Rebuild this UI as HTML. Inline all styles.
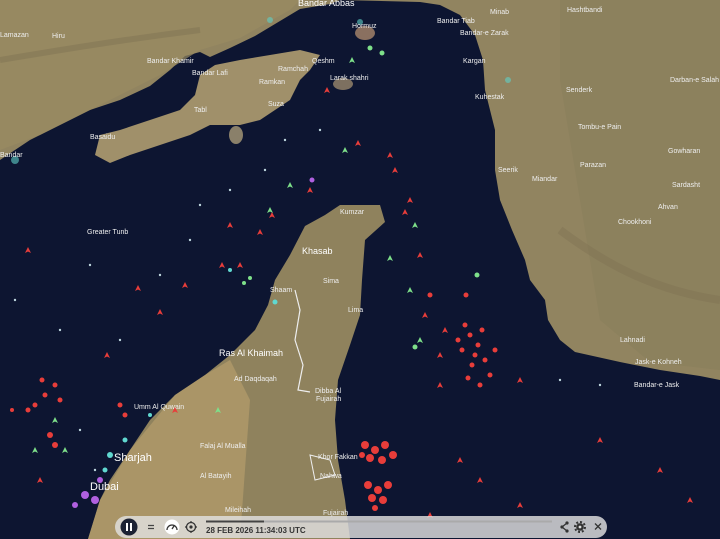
<!DOCTYPE html>
<html><head><meta charset="utf-8"><style>
html,body{margin:0;padding:0;width:720px;height:539px;overflow:hidden;background:#0d1531}
svg{position:absolute;left:0;top:0}
text{font-family:"Liberation Sans",sans-serif;fill:#eee;font-size:7px}
.b{font-size:9px;fill:#fff}
.bar{position:absolute;left:115px;top:516px;width:492px;height:22px;border-radius:11px;background:rgba(225,225,225,0.82)}
</style></head><body>
<svg width="720" height="539" viewBox="0 0 720 539">
<defs>
<path id="t" d="M0,-3 L3,3 L0,1.5 L-3,3Z"/>
</defs>
<rect width="720" height="539" fill="#0d1531"/>
<!-- Iran mainland -->
<path d="M0,0 L720,0 L720,380 L700,376 L660,370 L620,362 L575,352 L560,340 L548,320 L545,300 L530,280 L525,260 L512,230 L500,200 L495,170 L495,130 L485,90 L483,60 L475,35 L460,15 L440,5 L420,2 L340,0 L330,4 L300,9 L280,21 L255,36 L230,48 L210,57 L200,52 L185,56 L170,70 L150,86 L120,100 L90,110 L60,125 L30,140 L0,160Z" fill="#918460"/>
<path d="M0,0 L300,0 L290,10 L240,38 L200,50 L160,75 L100,105 L40,135 L0,150Z" fill="#9a8b62" opacity=".7"/>
<path d="M560,0 L720,0 L720,370 L650,362 L600,320 L580,200 L560,80Z" fill="#877d5a" opacity=".5"/>
<path d="M0,60 C60,50 120,40 200,30" stroke="#7a6e50" stroke-width="6" fill="none" opacity=".4"/>
<path d="M560,230 C600,260 650,290 720,300" stroke="#7a6e50" stroke-width="8" fill="none" opacity=".35"/>
<!-- Qeshm -->
<path d="M95,155 L100,135 L120,130 L150,120 L180,110 L195,95 L200,75 L215,65 L240,60 L270,55 L300,50 L320,55 L310,70 L300,80 L290,100 L275,110 L260,120 L240,125 L210,125 L190,135 L160,145 L130,155 L110,163Z" fill="#a0906a"/>
<ellipse cx="365" cy="33" rx="10" ry="7" fill="#8a7060"/>
<ellipse cx="343" cy="84" rx="10" ry="6" fill="#7d7060"/>
<ellipse cx="236" cy="135" rx="7" ry="9" fill="#8a806a"/>
<!-- Arabia / Musandam -->
<path d="M305,226 L325,215 L340,205 L380,205 L385,222 L365,240 L362,280 L360,315 L350,345 L338,380 L335,420 L338,460 L345,500 L350,539 L88,539 L100,500 L110,480 L130,450 L150,420 L175,395 L205,375 L230,355 L255,330 L268,305 L275,280 L290,255Z" fill="#8f825d"/>
<path d="M88,539 L100,500 L130,450 L175,395 L205,375 L230,360 L250,400 L240,539Z" fill="#b09a6a" opacity=".8"/>
<path d="M295,290 L300,310 L295,340 L303,365 L298,390 L310,392" stroke="#eee" stroke-width="1.2" fill="none"/>
<path d="M310,455 L330,460 L335,475 L315,480Z" stroke="#eee" stroke-width="1" fill="none"/>
<g fill="#5fd0c8" opacity=".6"><circle cx="15" cy="160" r="4"/><circle cx="360" cy="22" r="3"/><circle cx="270" cy="20" r="3"/><circle cx="508" cy="80" r="3"/></g>
<!-- labels -->
<text x="298" y="6" class="b">Bandar Abbas</text>
<text x="0" y="37">Lamazan</text><text x="52" y="38">Hiru</text>
<text x="352" y="28">Hormuz</text><text x="147" y="63">Bandar Khamir</text>
<text x="192" y="75">Bandar Lafi</text><text x="278" y="71">Ramchah</text>
<text x="312" y="63">Qeshm</text><text x="259" y="84">Ramkan</text>
<text x="330" y="80">Larak shahri</text><text x="194" y="112">Tabl</text>
<text x="268" y="106">Suza</text><text x="90" y="139">Basaidu</text>
<text x="0" y="157">Bandar</text><text x="437" y="23">Bandar Tiab</text>
<text x="460" y="35">Bandar-e Zarak</text><text x="463" y="63">Kargan</text>
<text x="475" y="99">Kuhestak</text><text x="490" y="14">Minab</text>
<text x="567" y="12">Hashtbandi</text><text x="670" y="82">Darban-e Salah</text>
<text x="566" y="92">Senderk</text><text x="578" y="129">Tombu-e Pain</text>
<text x="668" y="153">Gowharan</text><text x="580" y="167">Parazan</text>
<text x="498" y="172">Seerik</text><text x="532" y="181">Miandar</text>
<text x="672" y="187">Sardasht</text><text x="658" y="209">Ahvan</text>
<text x="618" y="224">Chookhoni</text><text x="620" y="342">Lahnadi</text>
<text x="635" y="364">Jask-e Kohneh</text><text x="634" y="387">Bandar-e Jask</text>
<text x="87" y="234">Greater Tunb</text><text x="340" y="214">Kumzar</text>
<text x="302" y="254" class="b">Khasab</text><text x="323" y="283">Sima</text>
<text x="270" y="292">Shaam</text><text x="348" y="312">Lima</text>
<text x="219" y="356" class="b">Ras Al Khaimah</text><text x="234" y="381">Ad Daqdaqah</text>
<text x="315" y="393">Dibba Al</text><text x="316" y="401">Fujairah</text>
<text x="134" y="409">Umm Al Quwain</text><text x="200" y="448">Falaj Al Mualla</text>
<text x="318" y="459">Khor Fakkan</text><text x="320" y="478">Nahwa</text>
<text x="200" y="478">Al Batayih</text><text x="114" y="461" class="b" style="font-size:11px">Sharjah</text>
<text x="90" y="490" class="b" style="font-size:11px">Dubai</text>
<text x="225" y="512">Mileihah</text><text x="323" y="515">Fujairah</text>
<g fill="#e83d3a">
<circle cx="465" cy="325" r="2.5"/><circle cx="470" cy="335" r="2.5"/><circle cx="478" cy="345" r="2.5"/><circle cx="462" cy="350" r="2.5"/><circle cx="485" cy="360" r="2.5"/><circle cx="472" cy="365" r="2.5"/><circle cx="490" cy="375" r="2.5"/><circle cx="480" cy="385" r="2.5"/><circle cx="468" cy="378" r="2.5"/><circle cx="475" cy="355" r="2.5"/><circle cx="458" cy="340" r="2.5"/><circle cx="482" cy="330" r="2.5"/><circle cx="495" cy="350" r="2.5"/><circle cx="466" cy="295" r="2.5"/><circle cx="430" cy="295" r="2.5"/>
<circle cx="365" cy="445" r="4"/><circle cx="375" cy="450" r="4"/><circle cx="385" cy="445" r="4"/><circle cx="393" cy="455" r="4"/><circle cx="370" cy="458" r="4"/><circle cx="382" cy="460" r="4"/><circle cx="362" cy="455" r="3"/>
<circle cx="368" cy="485" r="4"/><circle cx="378" cy="490" r="4"/><circle cx="388" cy="485" r="4"/><circle cx="372" cy="498" r="4"/><circle cx="383" cy="500" r="4"/><circle cx="375" cy="508" r="3"/>
<circle cx="42" cy="380" r="2.5"/><circle cx="55" cy="385" r="2.5"/><circle cx="45" cy="395" r="2.5"/><circle cx="60" cy="400" r="2.5"/><circle cx="35" cy="405" r="2.5"/><circle cx="28" cy="410" r="2.5"/><circle cx="50" cy="435" r="3"/><circle cx="55" cy="445" r="3"/><circle cx="120" cy="405" r="2.5"/><circle cx="125" cy="415" r="2.5"/><circle cx="12" cy="410" r="2"/>
<use href="#t" x="358" y="143"/><use href="#t" x="395" y="170"/><use href="#t" x="410" y="200"/><use href="#t" x="405" y="212"/><use href="#t" x="272" y="215"/><use href="#t" x="260" y="232"/><use href="#t" x="230" y="225"/><use href="#t" x="185" y="285"/><use href="#t" x="160" y="312"/><use href="#t" x="107" y="355"/><use href="#t" x="138" y="288"/><use href="#t" x="327" y="90"/><use href="#t" x="420" y="255"/><use href="#t" x="440" y="355"/><use href="#t" x="440" y="385"/><use href="#t" x="520" y="380"/><use href="#t" x="600" y="440"/><use href="#t" x="520" y="505"/><use href="#t" x="430" y="515"/><use href="#t" x="425" y="315"/><use href="#t" x="445" y="330"/><use href="#t" x="28" y="250"/><use href="#t" x="240" y="265"/><use href="#t" x="222" y="265"/><use href="#t" x="175" y="410"/><use href="#t" x="390" y="155"/><use href="#t" x="660" y="470"/><use href="#t" x="690" y="500"/><use href="#t" x="460" y="460"/><use href="#t" x="480" y="480"/><use href="#t" x="40" y="480"/><use href="#t" x="310" y="190"/>
</g>
<g fill="#7ee08a">
<use href="#t" x="345" y="150"/><use href="#t" x="290" y="185"/><use href="#t" x="270" y="210"/><use href="#t" x="352" y="60"/><use href="#t" x="415" y="225"/><use href="#t" x="420" y="340"/><use href="#t" x="218" y="410"/><use href="#t" x="55" y="420"/><use href="#t" x="65" y="450"/><use href="#t" x="35" y="450"/><use href="#t" x="410" y="290"/><use href="#t" x="390" y="258"/>
<circle cx="477" cy="275" r="2.5"/><circle cx="415" cy="347" r="2.5"/><circle cx="244" cy="283" r="2"/><circle cx="250" cy="278" r="2"/><circle cx="382" cy="53" r="2.5"/><circle cx="370" cy="48" r="2.5"/>
</g>
<g fill="#cfe9f0" opacity=".9">
<circle cx="200" cy="205" r="1.2"/><circle cx="160" cy="275" r="1.2"/><circle cx="90" cy="265" r="1.2"/><circle cx="60" cy="330" r="1.2"/><circle cx="120" cy="340" r="1.2"/><circle cx="285" cy="140" r="1.2"/><circle cx="320" cy="130" r="1.2"/><circle cx="265" cy="170" r="1.2"/><circle cx="230" cy="190" r="1.2"/><circle cx="190" cy="240" r="1.2"/><circle cx="600" cy="385" r="1.2"/><circle cx="560" cy="380" r="1.2"/><circle cx="95" cy="470" r="1.2"/><circle cx="80" cy="430" r="1.2"/><circle cx="15" cy="300" r="1.2"/>
</g>
<g fill="#b060e0"><circle cx="85" cy="495" r="4"/><circle cx="95" cy="500" r="4"/><circle cx="75" cy="505" r="3"/><circle cx="100" cy="480" r="3"/><circle cx="312" cy="180" r="2.5"/></g>
<g fill="#60d8d0"><circle cx="110" cy="455" r="3"/><circle cx="105" cy="470" r="2.5"/><circle cx="125" cy="440" r="2.5"/><circle cx="150" cy="415" r="2"/><circle cx="230" cy="270" r="2"/><circle cx="275" cy="302" r="2.5"/></g>
</svg>
<div class="bar">
<svg width="492" height="22" style="position:absolute;left:0;top:0">
<circle cx="14" cy="11" r="8.5" fill="#1c2233"/>
<rect x="11" y="7" width="2" height="8" fill="#fff"/><rect x="15" y="7" width="2" height="8" fill="#fff"/>
<path d="M33,9.5h6M33,12.5h6" stroke="#444" stroke-width="1.3"/>
<circle cx="57" cy="11" r="7.5" fill="#fff"/><path d="M52,14a5,5 0 1 1 10,0" stroke="#333" stroke-width="1.3" fill="none"/><path d="M57,13l2,-3" stroke="#333" stroke-width="1.3"/>
<circle cx="76" cy="11" r="4.5" stroke="#333" stroke-width="1.3" fill="none"/><circle cx="76" cy="11" r="1.6" fill="#333"/><path d="M76,5v2M76,15v2M70,11h2M80,11h2" stroke="#333" stroke-width="1.2"/>
<rect x="91" y="4.5" width="346" height="2" fill="#aaa"/><rect x="91" y="4.5" width="58" height="2" fill="#444"/>
<text x="91" y="17" style="font-size:8px;font-weight:bold;fill:#333">28 FEB 2026 11:34:03 UTC</text>
<path d="M452,7l-5,4l5,4" stroke="#333" stroke-width="1.3" fill="none"/><circle cx="452" cy="7" r="1.6" fill="#333"/><circle cx="452" cy="15" r="1.6" fill="#333"/><circle cx="447" cy="11" r="1.6" fill="#333"/>
<circle cx="465" cy="11" r="3.8" fill="#333"/><circle cx="465" cy="11" r="5" stroke="#333" stroke-width="2" stroke-dasharray="2 1.9" fill="none"/><circle cx="465" cy="11" r="1.4" fill="#ddd"/>
<path d="M480,7.5l6,6M486,7.5l-6,6" stroke="#333" stroke-width="1.3"/>
</svg>
</div>
</body></html>
